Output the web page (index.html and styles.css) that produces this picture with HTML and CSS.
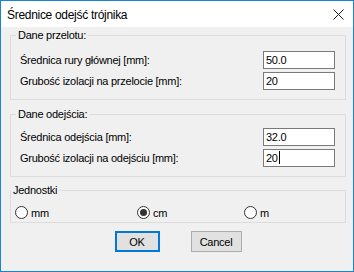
FILE: index.html
```html
<!DOCTYPE html>
<html lang="pl">
<head>
  <meta charset="UTF-8" />
  <title>Średnice odejść trójnika</title>
  <link rel="stylesheet" href="styles.css">
</head>
<body>
  <div class="window">
    <div class="titlebar">
      <span class="title">Średnice odejść trójnika</span>
      <svg class="close" width="11" height="11" viewBox="0 0 11 11">
        <path d="M0.5 0.5 L10.5 10.5 M10.5 0.5 L0.5 10.5" stroke="#1a1a1a" stroke-width="1" fill="none" />
      </svg>
    </div>

    <div class="client">
      <fieldset class="group">
        <legend>Dane przelotu:</legend>
        <div class="rows">
          <div class="row"><label>Średnica rury głównej [mm]:</label><div class="field">50.0</div></div>
          <div class="row"><label>Grubość izolacji na przelocie [mm]:</label><div class="field">20</div></div>
        </div>
      </fieldset>

      <fieldset class="group second">
        <legend>Dane odejścia:</legend>
        <div class="rows">
          <div class="row"><label>Średnica odejścia [mm]:</label><div class="field">32.0</div></div>
          <div class="row"><label>Grubość izolacji na odejściu [mm]:</label><div class="field">20<span class="caret"></span></div></div>
        </div>
      </fieldset>

      <fieldset class="group units">
        <legend>Jednostki</legend>
        <div class="radios">
          <label class="radio"><span class="dot"></span>mm</label>
          <label class="radio"><span class="dot checked"></span>cm</label>
          <label class="radio"><span class="dot"></span>m</label>
        </div>
      </fieldset>

      <div class="buttons">
        <button class="btn default">OK</button>
        <button class="btn cancel">Cancel</button>
      </div>
    </div>
  </div>
</body>
</html>
```

FILE: styles.css
```css
body {
  margin: 0;
  background: #fff;
}

.window {
  width: 354px;
  height: 272px;
  box-sizing: border-box;
  border: 1px solid #1883d7;
  background: #f0f0f0;
  display: flex;
  flex-direction: column;
  font-family: "Liberation Sans", Arial, sans-serif;
  font-size: 11px;
  letter-spacing: -0.25px;
  color: #000;
}

.titlebar {
  height: 26px;
  background: #fff;
  display: flex;
  align-items: center;
  justify-content: space-between;
  padding: 0 9px 0 6px;
}

.title {
  font-size: 12px;
  letter-spacing: -0.3px;
  padding-top: 2px;
}

.close {
  display: block;
}

.client {
  padding: 2px 7px 0 9px;
  display: flex;
  flex-direction: column;
}

.group {
  margin: 0;
  border: 1px solid #dcdcdc;
  padding: 9px 10px 9px 9px;
  min-width: 0;
}

.group legend {
  padding: 0 2px;
  margin-left: -4px;
  line-height: 13px;
}

.second {
  margin-top: 8px;
  padding-top: 7px;
}

.rows {
  display: flex;
  flex-direction: column;
  gap: 3px;
}

.row {
  display: flex;
  justify-content: space-between;
  align-items: center;
  height: 18px;
}

.field {
  width: 72px;
  height: 18px;
  box-sizing: border-box;
  border: 1px solid #7a7a7a;
  background: #fff;
  padding-left: 2px;
  line-height: 16px;
}

.caret {
  display: inline-block;
  width: 1px;
  height: 13px;
  background: #000;
  vertical-align: -2px;
  margin-left: 1px;
}

.units {
  margin-top: 7px;
  padding: 9px 0 3px 4px;
}

.radios {
  display: grid;
  grid-template-columns: 122px 107px auto;
  height: 13px;
}

.radio {
  display: flex;
  align-items: center;
  gap: 3px;
}

.dot {
  width: 13px;
  height: 13px;
  box-sizing: border-box;
  border: 1px solid #333;
  border-radius: 50%;
  background: #fff;
  display: flex;
  align-items: center;
  justify-content: center;
}

.dot.checked::after {
  content: "";
  width: 7px;
  height: 7px;
  border-radius: 50%;
  background: #333;
}

.buttons {
  display: flex;
  justify-content: center;
  gap: 31px;
  margin-top: 8px;
}

.btn {
  font: inherit;
  letter-spacing: inherit;
  height: 21px;
  padding: 0;
  background: #e1e1e1;
  border: 1px solid #adadad;
  color: #000;
}

.btn.default {
  width: 45px;
  border: 2px solid #0078d7;
}

.btn.cancel {
  width: 51px;
}
```
